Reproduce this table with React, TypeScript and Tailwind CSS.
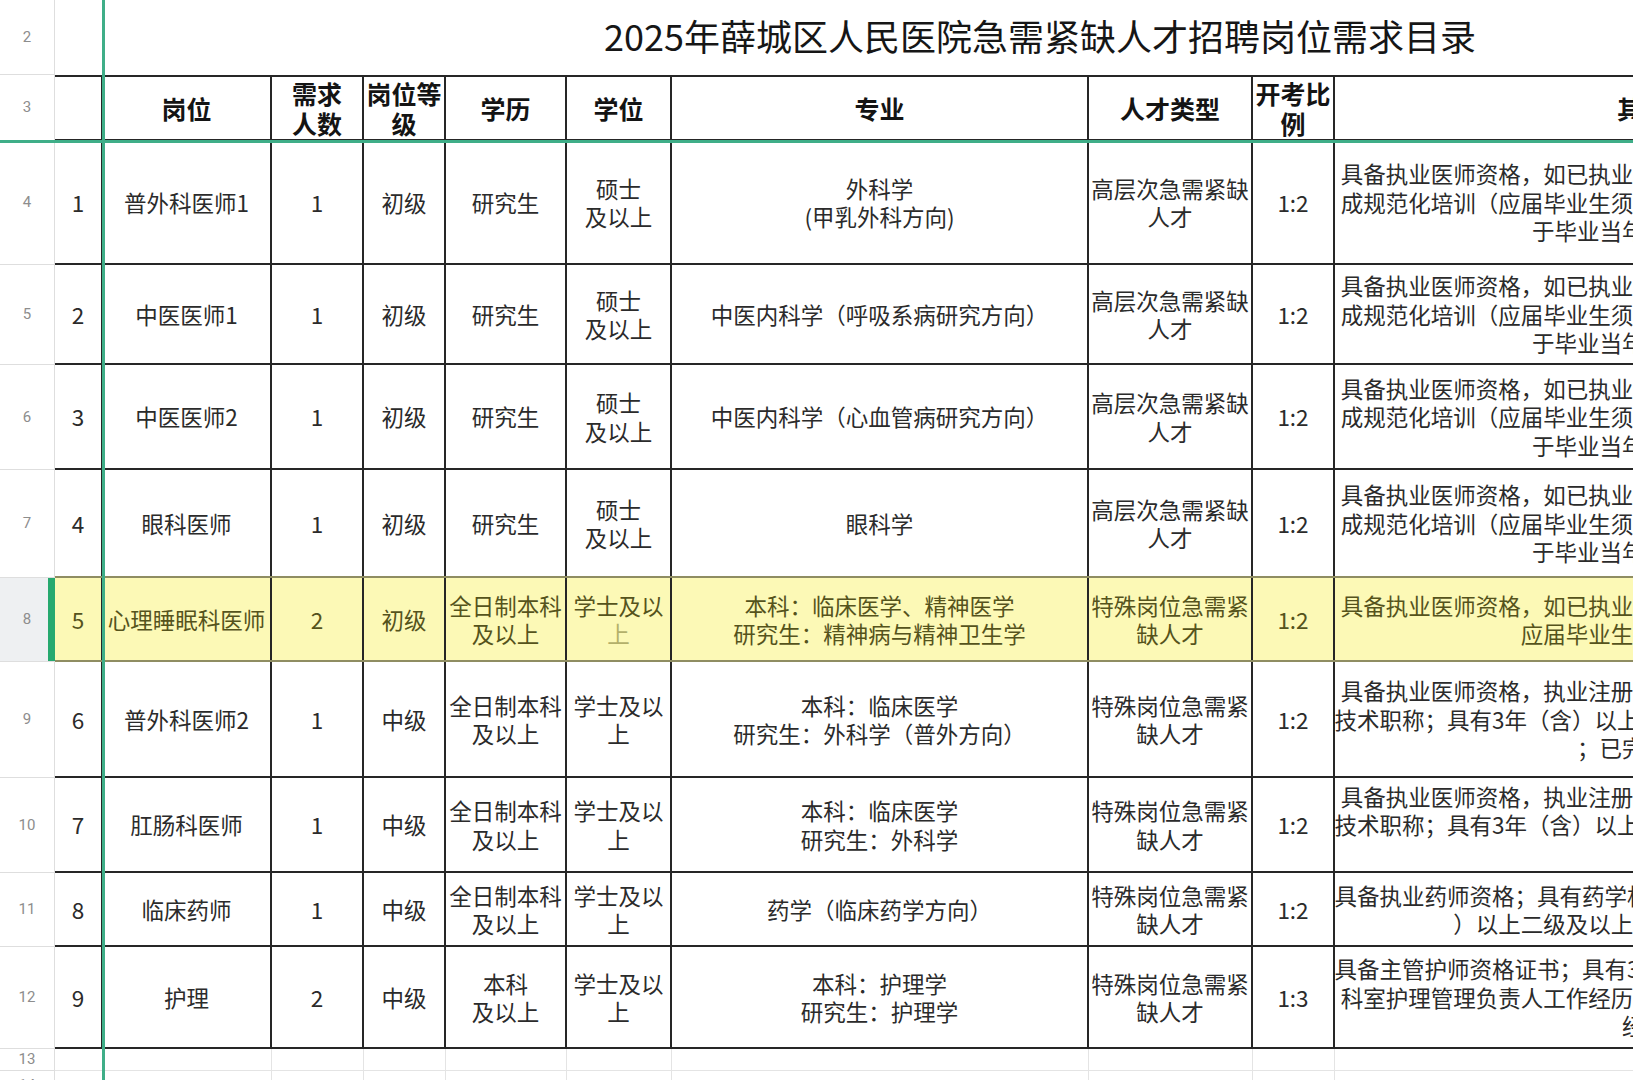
import React from "react";

const W = [
  "w-[48px]",
  "w-[169px]",
  "w-[92px]",
  "w-[82px]",
  "w-[121px]",
  "w-[105px]",
  "w-[417px]",
  "w-[164px]",
  "w-[82px]",
  "w-[666px]",
];

type RowData = {
  n: number;
  h: string;
  seq: string;
  name: string;
  count: string;
  level: string;
  edu: string[];
  degree: string[];
  major: string[];
  type: string[];
  ratio: string;
  other: string[];
  hl?: boolean;
  lineCls?: string;
};

const OTHER_A = [
  "具备执业医师资格，如已执业，执业范围须与报考岗位一致；已完",
  "成规范化培训（应届毕业生须在规定时间内取得住院医师规范化培",
  "于毕业当年取得合格证书）",
];

const OTHER_B1 = "具备执业医师资格，执业注册范围为外科专业；具有中级以上专业";
const OTHER_B2 = "技术职称；具有3年（含）以上二级及以上医院本专业临床工作经历";

const HIGH = ["高层次急需紧缺", "人才"];
const SPEC = ["特殊岗位急需紧", "缺人才"];
const FULL = ["全日制本科", "及以上"];
const BACH = ["学士及以", "上"];
const MAST = ["硕士", "及以上"];

const ROWS: RowData[] = [
  { n: 4, h: "h-[124px]", seq: "1", name: "普外科医师1", count: "1", level: "初级", edu: ["研究生"], degree: MAST, major: ["外科学", "(甲乳外科方向)"], type: HIGH, ratio: "1:2", other: OTHER_A },
  { n: 5, h: "h-[100px]", seq: "2", name: "中医医师1", count: "1", level: "初级", edu: ["研究生"], degree: MAST, major: ["中医内科学（呼吸系病研究方向）"], type: HIGH, ratio: "1:2", other: OTHER_A },
  { n: 6, h: "h-[105px]", seq: "3", name: "中医医师2", count: "1", level: "初级", edu: ["研究生"], degree: MAST, major: ["中医内科学（心血管病研究方向）"], type: HIGH, ratio: "1:2", other: OTHER_A },
  { n: 7, h: "h-[108px]", seq: "4", name: "眼科医师", count: "1", level: "初级", edu: ["研究生"], degree: MAST, major: ["眼科学"], type: HIGH, ratio: "1:2", other: OTHER_A, lineCls: "border-[#8f8d62]" },
  { n: 8, h: "h-[84px]", seq: "5", name: "心理睡眠科医师", count: "2", level: "初级", edu: FULL, degree: BACH, major: ["本科：临床医学、精神医学", "研究生：精神病与精神卫生学"], type: SPEC, ratio: "1:2", other: [OTHER_A[0], "应届毕业生须于当年取得证书"], hl: true, lineCls: "border-[#8f8d62]" },
  { n: 9, h: "h-[116px]", seq: "6", name: "普外科医师2", count: "1", level: "中级", edu: FULL, degree: BACH, major: ["本科：临床医学", "研究生：外科学（普外方向）"], type: SPEC, ratio: "1:2", other: [OTHER_B1, OTHER_B2, "；已完成住院规培"] },
  { n: 10, h: "h-[95px]", seq: "7", name: "肛肠科医师", count: "1", level: "中级", edu: FULL, degree: BACH, major: ["本科：临床医学", "研究生：外科学"], type: SPEC, ratio: "1:2", other: [OTHER_B1, OTHER_B2, "优先。"] },
  { n: 11, h: "h-[74px]", seq: "8", name: "临床药师", count: "1", level: "中级", edu: FULL, degree: BACH, major: ["药学（临床药学方向）"], type: SPEC, ratio: "1:2", other: ["具备执业药师资格；具有药学相关专业中级以上职称，具有3年（含", "）以上二级及以上医院临床药学工作经历。"] },
  { n: 12, h: "h-[102px]", seq: "9", name: "护理", count: "2", level: "中级", edu: ["本科", "及以上"], degree: BACH, major: ["本科：护理学", "研究生：护理学"], type: SPEC, ratio: "1:3", other: ["具备主管护师资格证书；具有3年（含）以上二级及以上综合性医院", "科室护理管理负责人工作经历，具有护理质量管理相关培训和工作", "经验优先"] },
];

function RowHead({ n, sel }: { n: number; sel?: boolean }) {
  return (
    <div
      className={`relative w-[55px] shrink-0 flex items-center justify-center border-r border-b border-[#dedede] text-[15px] text-[#8d8d8d] font-['Roboto',sans-serif] ${sel ? "bg-[#eef0f2]" : "bg-white"}`}
    >
      {n}
      {sel && <div className="absolute -right-px top-0 bottom-0 w-[7px] bg-[#26a96f]" />}
    </div>
  );
}

function Lines({ lines, dimLast }: { lines: string[]; dimLast?: boolean }) {
  return (
    <div className="flex flex-col items-center">
      {lines.map((l, i) => (
        <div
          key={i}
          className={`whitespace-nowrap ${dimLast && i === lines.length - 1 && lines.length > 1 ? "text-[#b3b06a]" : ""}`}
        >
          {l}
        </div>
      ))}
    </div>
  );
}

function BodyRow({ r }: { r: RowData }) {
  const cell = "shrink-0 flex items-center justify-center text-center border-r-2 border-[#262626] overflow-hidden";
  const cols: React.ReactNode[] = [
    <Lines lines={[r.seq]} />,
    <Lines lines={[r.name]} />,
    <Lines lines={[r.count]} />,
    <Lines lines={[r.level]} />,
    <Lines lines={r.edu} />,
    <Lines lines={r.degree} dimLast={r.hl} />,
    <Lines lines={r.major} />,
    <Lines lines={r.type} />,
    <Lines lines={[r.ratio]} />,
    <Lines lines={r.other} />,
  ];
  return (
    <div className={`flex ${r.h}`}>
      <RowHead n={r.n} sel={r.hl} />
      <div
        className={`flex border-b-2 ${r.lineCls ?? "border-[#262626]"} text-[22.5px] leading-[28.5px] ${r.hl ? "bg-[#fcf9b6] text-[#55531c]" : "bg-white text-[#2b2b2b]"}`}
      >
        {cols.map((c, i) => (
          <div key={i} className={`${W[i]} ${cell} ${i === 0 ? "border-r-0" : ""}`}>
            {c}
          </div>
        ))}
      </div>
    </div>
  );
}

function EmptyRow({ n, h }: { n: number; h: string }) {
  return (
    <div className={`flex ${h}`}>
      <RowHead n={n} />
      <div className="flex">
        {W.map((w, i) => (
          <div key={i} className={`${w} shrink-0 border-r border-b border-[#e4e4e4]`} />
        ))}
      </div>
    </div>
  );
}

export default function App() {
  const head = "shrink-0 flex items-center justify-center text-center border-r-2 border-[#262626]";
  const headers: string[][] = [
    [],
    ["岗位"],
    ["需求", "人数"],
    ["岗位等", "级"],
    ["学历"],
    ["学位"],
    ["专业"],
    ["人才类型"],
    ["开考比", "例"],
    ["其他条件"],
  ];
  return (
    <div className="relative w-[1633px] h-[1080px] overflow-hidden bg-white font-['Noto_Sans_CJK_SC',sans-serif]">
      <div className="flex flex-col">
        {/* Row 2: title */}
        <div className="flex h-[75px]">
          <RowHead n={2} />
          <div className="w-[48px] shrink-0 border-r border-[#e4e4e4]" />
          <div className="w-[1874px] shrink-0 flex items-center justify-center pb-[6px] text-[36px] leading-[44px] text-[#161616] whitespace-nowrap">
            2025年薛城区人民医院急需紧缺人才招聘岗位需求目录
          </div>
        </div>

        {/* Row 3: header */}
        <div className="flex h-[66px]">
          <RowHead n={3} />
          <div className="flex border-t-2 border-b-2 border-[#262626] text-[25px] leading-[30px] font-bold text-[#141414]">
            {headers.map((hd, i) => (
              <div key={i} className={`${W[i]} ${head} ${i === 0 ? "border-r-0" : ""}`}>
                <Lines lines={hd} />
              </div>
            ))}
          </div>
        </div>

        {ROWS.map((r) => (
          <BodyRow key={r.n} r={r} />
        ))}

        <EmptyRow n={13} h="h-[22px]" />
        <EmptyRow n={14} h="h-[30px]" />
      </div>

      {/* frozen pane lines */}
      <div className="absolute left-[102px] top-0 h-full w-[3px] bg-[#3fae88]" />
      <div className="absolute left-0 top-[140px] w-full h-[3px] bg-[#3fae88]" />
    </div>
  );
}
